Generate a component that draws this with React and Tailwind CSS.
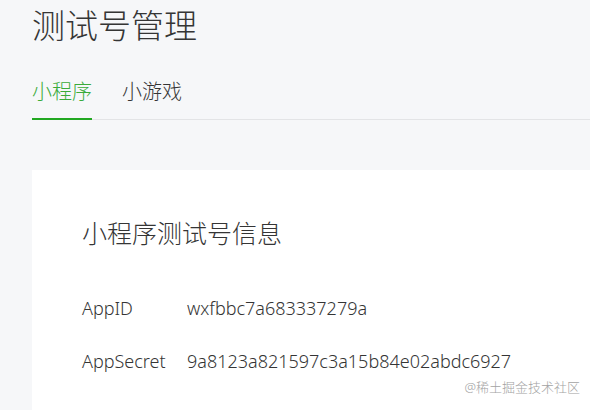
export default function App() {
  const rows = [
    { label: "AppID", value: "wxfbbc7a683337279a" },
    { label: "AppSecret", value: "9a8123a821597c3a15b84e02abdc6927" },
  ];

  return (
    <div className="relative w-[590px] h-[410px] overflow-hidden bg-[#f6f7f9] pl-8 text-[#353535] font-light font-['Noto_Sans','Noto_Sans_CJK_SC',sans-serif]">
      {/* Page title */}
      <h1 className="text-[33px] leading-[52px] font-light">测试号管理</h1>

      {/* Tabs */}
      <div className="mt-6 flex gap-[30px] border-b border-[#e3e4e6]">
        <div className="-mb-px border-b-2 border-[#22a822] pb-[10px] text-[20px] leading-8 text-[#3aab3a]">
          小程序
        </div>
        <div className="pb-[10px] text-[20px] leading-8">小游戏</div>
      </div>

      {/* Info card */}
      <div className="mt-[50px] h-[300px] bg-white pl-[50px] pt-[45px]">
        <h2 className="text-[25px] leading-9 font-light">小程序测试号信息</h2>
        <div className="mt-[43px] flex flex-col gap-[25px]">
          {rows.map((row) => (
            <div key={row.label} className="flex text-[18px] leading-7">
              <span className="w-[105px]">{row.label}</span>
              <span>{row.value}</span>
            </div>
          ))}
        </div>
      </div>

      {/* Watermark */}
      <div className="absolute right-[10px] bottom-[15px] text-[13px] leading-4 text-[#a3a3a3]">
        @稀土掘金技术社区
      </div>
    </div>
  );
}
